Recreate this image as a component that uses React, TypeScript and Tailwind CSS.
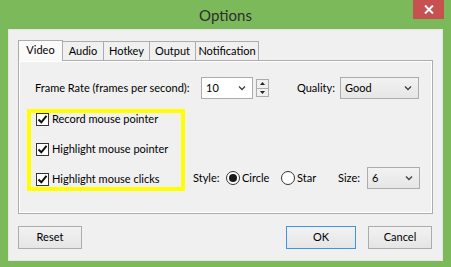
import { useState } from "react";

const font = { fontFamily: 'Lato, "Noto Sans", sans-serif' };

const tabs = [
  { name: "Video", w: "w-[45px]" },
  { name: "Audio", w: "w-[42px]" },
  { name: "Hotkey", w: "w-[47px]" },
  { name: "Output", w: "w-[47px]" },
  { name: "Notification", w: "w-[64px]" },
];

function Chevron() {
  return (
    <svg width="8" height="6" viewBox="0 0 8 6" className="shrink-0">
      <path d="M1 1.5 L4 4.5 L7 1.5" fill="none" stroke="#444" strokeWidth="1.4" />
    </svg>
  );
}

function Combo({ value, width, editable }: { value: string; width: string; editable?: boolean }) {
  return (
    <div
      className={`${width} h-[22px] shrink-0 flex items-center justify-between pl-[4px] pr-[6px] border border-[#acacac] ${
        editable ? "bg-white" : "bg-gradient-to-b from-[#f2f2f2] to-[#e6e6e6]"
      }`}
    >
      <span>{value}</span>
      <Chevron />
    </div>
  );
}

function Spinner() {
  return (
    <div className="flex flex-col w-[13px] h-[18px]">
      <div className="flex-1 flex items-center justify-center border border-[#acacac] bg-[#f0f0f0]">
        <svg width="5" height="3" viewBox="0 0 5 3">
          <path d="M0 3 L2.5 0 L5 3 Z" fill="#222" />
        </svg>
      </div>
      <div className="flex-1 flex items-center justify-center border border-t-0 border-[#acacac] bg-[#f0f0f0]">
        <svg width="5" height="3" viewBox="0 0 5 3">
          <path d="M0 0 L2.5 3 L5 0 Z" fill="#222" />
        </svg>
      </div>
    </div>
  );
}

function Check({ label }: { label: string }) {
  return (
    <div className="h-[12px] flex items-center gap-[3px]">
      <div className="w-[13px] h-[13px] shrink-0 border border-[#333] bg-white flex items-center justify-center">
        <svg width="11" height="11" viewBox="0 0 11 11">
          <path d="M1.5 5.5 L4.3 8.3 L9.5 1.8" fill="none" stroke="#111" strokeWidth="2" />
        </svg>
      </div>
      <span>{label}</span>
    </div>
  );
}

function Radio({ label, checked, width }: { label: string; checked?: boolean; width: string }) {
  return (
    <div className={`${width} shrink-0 flex items-center gap-[2px]`}>
      <div className="w-[14px] h-[14px] rounded-full border border-[#333] bg-white flex items-center justify-center">
        {checked && <div className="w-[8px] h-[8px] rounded-full bg-[#1a1a1a]" />}
      </div>
      <span>{label}</span>
    </div>
  );
}

function Button({ label, width, primary }: { label: string; width: string; primary?: boolean }) {
  return (
    <button
      type="button"
      className={`${width} h-[23px] flex items-center justify-center border bg-gradient-to-b from-[#f2f2f2] to-[#e5e5e5] ${
        primary ? "border-[#3c95e8]" : "border-[#acacac]"
      }`}
    >
      {label}
    </button>
  );
}

export default function App() {
  const [active, setActive] = useState("Video");

  return (
    <div className="w-[451px] h-[267px] bg-[#7cb95b] flex flex-col text-[11px] text-black whitespace-nowrap" style={font}>
      <div className="h-[29px] grid grid-cols-[1fr_auto_1fr] items-start">
        <div />
        <div className="pt-[4px] text-[15px] text-[#2e2e2e]">Options</div>
        <div className="justify-self-end mr-[7px] w-[31px] h-[19px] bg-[#c75050] flex items-center justify-center">
          <svg width="10" height="9" viewBox="0 0 10 9">
            <path d="M1 0.5 L9 8.5 M9 0.5 L1 8.5" stroke="#fff" strokeWidth="2" />
          </svg>
        </div>
      </div>

      <div className="mx-[8px] h-[232px] border border-[#e4e4e4] bg-[#f0f0f0] flex flex-col pt-[10px]">
        <div className="flex items-end ml-[9px] -mb-[1px]">
          {tabs.map((t) => {
            const sel = t.name === active;
            return (
              <button
                type="button"
                key={t.name}
                onClick={() => setActive(t.name)}
                className={
                  sel
                    ? `${t.w} relative z-10 h-[21px] pb-[2px] border border-b-0 border-[#acacac] bg-[#fafafa] flex items-center justify-center`
                    : `${t.w} h-[19px] mb-[1px] -ml-[1px] border border-b-0 border-[#acacac] bg-[#f0f0f0] flex items-center justify-center`
                }
              >
                {t.name}
              </button>
            );
          })}
        </div>

        <div className="mx-[9px] h-[154px] border border-[#acacac] shadow-[inset_0_0_0_1px_#ffffff] bg-[#f0f0f0] pt-[16px] pl-[16px] flex flex-col">
          <div className="flex items-center h-[22px]">
            <span className="w-[166px] shrink-0">Frame Rate (frames per second):</span>
            <Combo value="10" width="w-[52px]" editable />
            <div className="ml-[3px]">
              <Spinner />
            </div>
            <span className="ml-[28px] w-[43px] shrink-0">Quality:</span>
            <Combo value="Good" width="w-[79px]" />
          </div>

          <div className="flex items-end mt-[10px] -ml-[8px]">
            <div className="w-[158px] h-[82px] shrink-0 border-[4px] border-[#ffff00] flex flex-col gap-[18px] pl-[5px]">
              <Check label="Record mouse pointer" />
              <Check label="Highlight mouse pointer" />
              <Check label="Highlight mouse clicks" />
            </div>
            <div className="flex items-center ml-[8px] mb-[2px]">
              <span className="w-[33px] shrink-0">Style:</span>
              <Radio label="Circle" checked width="w-[55px]" />
              <Radio label="Star" width="w-[57px]" />
              <span className="w-[29px] shrink-0">Size:</span>
              <Combo value="6" width="w-[53px]" />
            </div>
          </div>
        </div>

        <div className="flex mt-[12px] ml-[9px] mr-[10px]">
          <Button label="Reset" width="w-[64px]" />
          <div className="flex-1" />
          <Button label="OK" width="w-[70px]" primary />
          <div className="w-[12px]" />
          <Button label="Cancel" width="w-[64px]" />
        </div>
      </div>
    </div>
  );
}
